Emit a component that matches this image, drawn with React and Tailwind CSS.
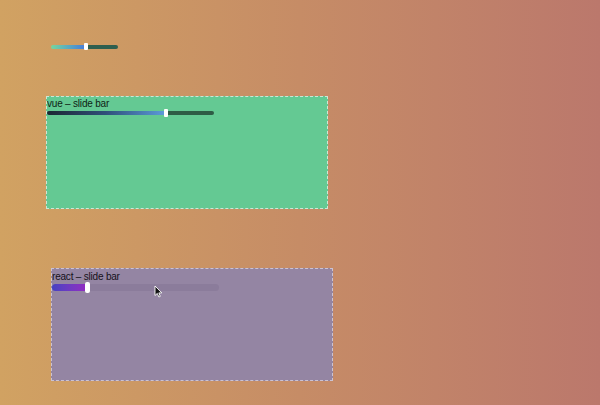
import React from "react";

function Cursor() {
  return (
    <svg className="absolute left-[154px] top-[285px]" width="9" height="13" viewBox="0 0 9 13">
      <path d="M1 1 L1 10.5 L3.3 8.4 L4.9 12 L6.3 11.4 L4.8 7.9 L7.8 7.9 Z" fill="#111" stroke="#fff" strokeWidth="0.9" strokeLinejoin="round" />
    </svg>
  );
}

export default function App() {
  return (
    <div
      className="relative flex flex-col items-start w-full h-[405px] overflow-hidden bg-linear-to-r from-[#d1a262] via-[#c68c66] to-[#bb786c] pt-[43px]"
      style={{ fontFamily: '"Liberation Sans", Arial, sans-serif' }}
    >
      {/* top slider */}
      <div className="ml-[51px] flex items-center w-[67px] h-[7px]">
        <div className="h-[4px] w-[33px] rounded-l-full bg-linear-to-r from-[#76d69c] to-[#4a7ed6]" />
        <div className="w-[4px] h-[7px] rounded-[1px] bg-white" />
        <div className="h-[4px] flex-1 rounded-r-full bg-[#2e5f4f]" />
      </div>

      {/* vue box */}
      <div className="ml-[46px] mt-[46px] flex flex-col items-start w-[282px] h-[113px] bg-[#64c993] border border-dashed border-[#cfe6d6]">
        <div className="text-[10px] leading-[11px] text-[#0f1e15] pt-[1px] tracking-[-0.2px]">vue – slide bar</div>
        <div className="flex items-center mt-[0px] w-[167px] h-[8px]">
          <div className="h-[4px] w-[117px] rounded-l-full bg-linear-to-r from-[#1b2733] via-[#2f4f7a] to-[#5b9ad8]" />
          <div className="w-[4px] h-[8px] rounded-[1px] bg-white" />
          <div className="h-[4px] flex-1 rounded-r-full bg-[#2e5b45]" />
        </div>
      </div>

      {/* react box */}
      <div className="ml-[51px] mt-[59px] flex flex-col items-start w-[282px] h-[113px] bg-[#9485a3] border border-dashed border-[#cbc3d3]">
        <div className="text-[10px] leading-[11px] text-[#14111a] pt-[2px] tracking-[-0.2px]">react – slide bar</div>
        <div className="flex items-center w-[167px] h-[11px]">
          <div className="h-[7px] w-[33px] rounded-l-full bg-linear-to-r from-[#4541c2] to-[#8f2cc2]" />
          <div className="w-[5px] h-[11px] rounded-[2px] bg-white" />
          <div className="h-[7px] flex-1 rounded-r-full bg-[#8b7c9b]" />
        </div>
      </div>

      <Cursor />
    </div>
  );
}
